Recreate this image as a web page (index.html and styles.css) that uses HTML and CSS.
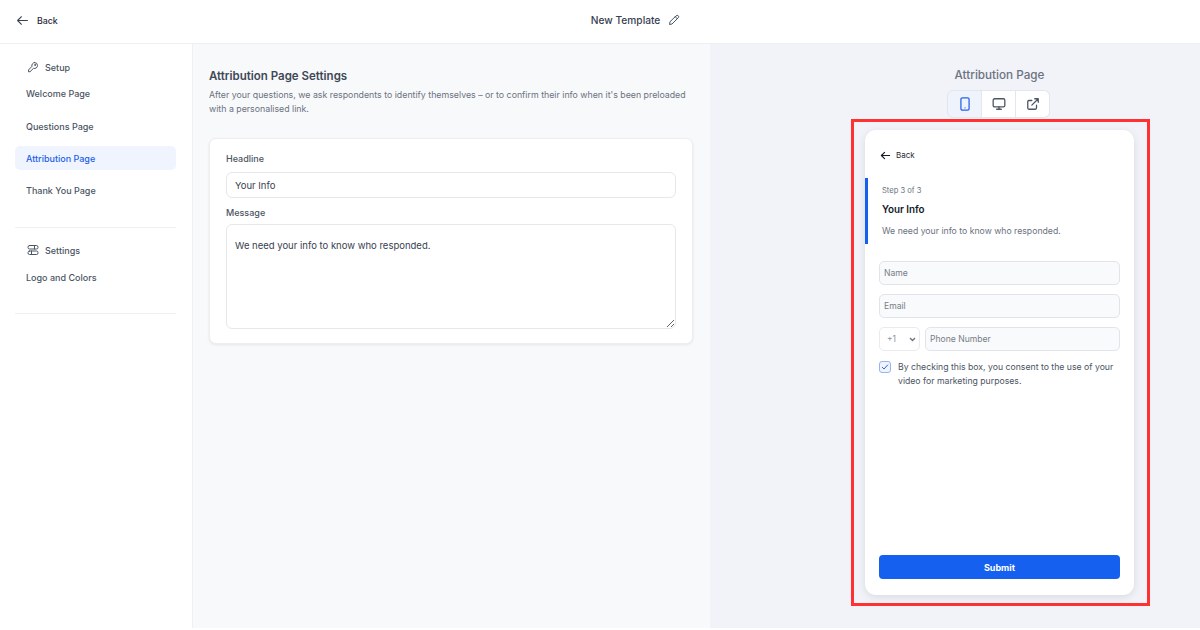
FILE: index.html
```html
<!DOCTYPE html>
<html lang="en">
<head>
    <meta charset="UTF-8">
    <meta name="viewport" content="width=device-width, initial-scale=1.0">
    <title>New Template</title>
    <link rel="stylesheet" href="styles.css">
</head>
<body>
    <!-- Top bar -->
    <header class="topbar">
        <a class="back-link">
            <svg class="icon" width="13" height="13" viewBox="0 0 24 24" fill="none" stroke="#374151" stroke-width="2" stroke-linecap="round" stroke-linejoin="round"><path d="M21 12H3M10 5l-7 7 7 7"/></svg>
            Back
        </a>
        <div class="template-name">
            New Template
            <svg width="12" height="12" viewBox="0 0 24 24" fill="none" stroke="#4b5563" stroke-width="2" stroke-linecap="round" stroke-linejoin="round"><path d="M16.5 3.5a2.8 2.8 0 0 1 4 4L8 20l-5 1 1-5z"/><path d="M14.5 5.5l4 4"/></svg>
        </div>
    </header>

    <div class="workspace">
        <!-- Sidebar -->
        <nav class="sidebar">
            <div class="nav-group setup-group">
                <div class="nav-heading">
                    <svg width="12" height="12" viewBox="0 0 24 24" fill="none" stroke="#4b5563" stroke-width="2" stroke-linecap="round" stroke-linejoin="round"><path d="M15 3a6 6 0 0 1 6 6 6 6 0 0 1-8 5.6L6 21.5H3V18l6.900-7.400A6 6 0 0 1 15 3z"/><circle cx="16" cy="8" r="1"/></svg>
                    Setup
                </div>
                <a class="nav-item first">Welcome Page</a>
                <a class="nav-item">Questions Page</a>
                <a class="nav-item active">Attribution Page</a>
                <a class="nav-item">Thank You Page</a>
            </div>
            <div class="nav-group settings-group">
                <div class="nav-heading">
                    <svg width="12" height="12" viewBox="0 0 24 24" fill="none" stroke="#4b5563" stroke-width="2" stroke-linecap="round" stroke-linejoin="round"><rect x="2" y="3" width="20" height="7" rx="3"/><path d="M15 3v7"/><rect x="2" y="14" width="20" height="7" rx="3"/><path d="M9 14v7"/></svg>
                    Settings
                </div>
                <a class="nav-item logo-item">Logo and Colors</a>
            </div>
        </nav>

        <!-- Settings form -->
        <main class="settings">
            <h1>Attribution Page Settings</h1>
            <p class="intro">After your questions, we ask respondents to identify themselves – or to confirm their info when it's been preloaded with a personalised link.</p>
            <section class="card">
                <label class="field-label">Headline</label>
                <input class="text-input" type="text" value="Your Info">
                <label class="field-label message-label">Message</label>
                <textarea class="text-area">We need your info to know who responded.</textarea>
            </section>
        </main>

        <!-- Preview -->
        <aside class="preview">
            <h2>Attribution Page</h2>
            <div class="view-toggle">
                <button class="view-btn active">
                    <svg width="14" height="14" viewBox="0 0 24 24" fill="none" stroke="#2563eb" stroke-width="2.200" stroke-linecap="round" stroke-linejoin="round"><rect x="5" y="1.500" width="14" height="21" rx="2.500"/><path d="M12 18.500h.01"/></svg>
                </button>
                <button class="view-btn">
                    <svg width="14" height="14" viewBox="0 0 24 24" fill="none" stroke="#4b5563" stroke-width="2.200" stroke-linecap="round" stroke-linejoin="round"><rect x="2" y="3" width="20" height="14" rx="2.500"/><path d="M8 21h8M12 17v4"/></svg>
                </button>
                <button class="view-btn">
                    <svg width="14" height="14" viewBox="0 0 24 24" fill="none" stroke="#4b5563" stroke-width="2.200" stroke-linecap="round" stroke-linejoin="round"><path d="M18 14v5a2 2 0 0 1-2 2H5a2 2 0 0 1-2-2V8a2 2 0 0 1 2-2h5"/><path d="M15 3h6v6M10 14L21 3"/></svg>
                </button>
            </div>

            <div class="highlight">
                <div class="phone-card">
                    <a class="phone-back">
                        <svg width="11" height="11" viewBox="0 0 24 24" fill="none" stroke="#111827" stroke-width="2.400" stroke-linecap="round" stroke-linejoin="round"><path d="M21 12H3M10 5l-7 7 7 7"/></svg>
                        Back
                    </a>
                    <div class="step-block">
                        <div class="step-count">Step 3 of 3</div>
                        <div class="step-title">Your Info</div>
                        <div class="step-message">We need your info to know who responded.</div>
                    </div>
                    <form class="phone-form">
                        <input class="phone-input" type="text" placeholder="Name">
                        <input class="phone-input" type="text" placeholder="Email">
                        <div class="phone-row">
                            <select class="code-select"><option>+1</option></select>
                            <input class="phone-input" type="text" placeholder="Phone Number">
                        </div>
                        <div class="consent">
                            <span class="check-box">
                                <svg width="8" height="8" viewBox="0 0 24 24" fill="none" stroke="#2563eb" stroke-width="3" stroke-linecap="round" stroke-linejoin="round"><path d="M4 13l5 5L20 6"/></svg>
                            </span>
                            <span>By checking this box, you consent to the use of your video for marketing purposes.</span>
                        </div>
                    </form>
                    <button class="submit-btn">Submit</button>
                </div>
            </div>
        </aside>
    </div>
</body>
</html>
```

FILE: styles.css
```css
* {
    box-sizing: border-box;
    margin: 0;
    padding: 0;
    font-family: Inter, "Noto Sans", sans-serif;
}
body {
    width: 1200px;
    height: 630px;
    overflow: hidden;
    background-color: #ffffff;
    color: #374151;
}
.topbar {
    display: flex;
    align-items: center;
    height: 44px;
    padding: 0 0 3px 16px;
    background-color: #ffffff;
    border-bottom: 1px solid #eef0f4;
}
.back-link {
    display: flex;
    align-items: center;
    gap: 8px;
    font-size: 8.800px;
    font-weight: 500;
    color: #1f2937;
}
.template-name {
    display: flex;
    align-items: center;
    gap: 8px;
    margin-left: 533px;
    font-size: 10.200px;
    font-weight: 500;
    color: #374151;
}
.workspace {
    display: flex;
    height: 584px;
}
.sidebar {
    width: 193px;
    padding: 0 16px 0 15px;
    background-color: #ffffff;
    border-right: 1px solid #eef0f4;
}
.nav-group {
    border-bottom: 1px solid #eef0f4;
}
.setup-group {
    height: 184px;
    padding-top: 16px;
}
.settings-group {
    height: 86px;
    padding-top: 15px;
}
.nav-heading {
    display: flex;
    align-items: center;
    gap: 6px;
    height: 14px;
    padding-left: 12px;
    font-size: 9px;
    font-weight: 500;
    color: #4b5563;
}
.nav-item {
    display: flex;
    align-items: center;
    height: 24px;
    margin-bottom: 8px;
    padding-left: 11px;
    font-size: 9px;
    font-weight: 500;
    color: #4b5563;
    border-radius: 5px;
}
.nav-item.first {
    margin-top: 7px;
    margin-bottom: 9px;
}
.logo-item {
    margin-top: 8px;
}
.nav-item.active {
    background-color: #eff4ff;
    color: #1d5fe8;
}
.settings {
    width: 517px;
    padding: 24px 17px 0 16px;
    background-color: #f8f9fb;
}
.settings h1 {
    font-size: 11.500px;
    font-weight: 600;
    line-height: 16px;
    color: #3f4856;
}
.intro {
    margin-top: 4px;
    font-size: 8.800px;
    line-height: 13.500px;
    color: #6b7280;
}
.card {
    display: flex;
    flex-direction: column;
    margin-top: 23px;
    height: 206px;
    padding: 14px 16px;
    background-color: #ffffff;
    border: 1px solid #eceef2;
    border-radius: 7px;
    box-shadow: 0 1px 3px rgba(0, 0, 0, 0.08);
}
.field-label {
    font-size: 9px;
    font-weight: 500;
    line-height: 12px;
    color: #4b5563;
}
.message-label {
    margin-top: 9px;
}
.text-input {
    flex: none;
    height: 26px;
    margin-top: 7px;
    padding: 0 8px;
    font-size: 9.500px;
    color: #374151;
    background-color: #ffffff;
    border: 1px solid #e5e7eb;
    border-radius: 6px;
    outline: none;
}
.text-area {
    flex: none;
    height: 105px;
    margin-top: 5px;
    padding: 15px 8px;
    font-size: 9.500px;
    color: #374151;
    border: 1px solid #e5e7eb;
    border-radius: 6px;
    outline: none;
}
.preview {
    flex: 1;
    display: flex;
    flex-direction: column;
    align-items: center;
    padding: 24px 0 0 89px;
    background-color: #f1f3f8;
}
.preview h2 {
    font-size: 11.700px;
    font-weight: 500;
    line-height: 15px;
    color: #6b7280;
}
.view-toggle {
    display: flex;
    gap: 1px;
    margin: 7px 2px 0 0;
    background-color: #e2e6ee;
    border: 1px solid #e2e6ee;
    border-radius: 6px;
    overflow: hidden;
}
.view-btn {
    display: flex;
    align-items: center;
    justify-content: center;
    width: 33px;
    height: 26px;
    background-color: #ffffff;
    border: none;
}
.view-btn.active {
    background-color: #eff3fb;
}
.highlight {
    flex: none;
    width: 299px;
    height: 487px;
    margin: 1px 0 0 2px;
    padding: 8px 13px 8px 11px;
    border: 3px solid #ff3131;
}
.phone-card {
    display: flex;
    flex-direction: column;
    height: 465px;
    padding: 19px 14px 16px;
    background-color: #ffffff;
    border-radius: 11px;
    box-shadow: 0 2px 8px rgba(0, 0, 0, 0.1);
}
.phone-back {
    display: flex;
    align-items: center;
    gap: 5px;
    height: 12px;
    padding-left: 1px;
    font-size: 8px;
    color: #1f2937;
}
.step-block {
    width: 255px;
    height: 66px;
    margin: 17px 0 0 -14px;
    padding: 8px 0 0 14px;
    border-left: 3px solid #1660f0;
}
.step-count {
    font-size: 7.600px;
    line-height: 10px;
    color: #6b7280;
}
.step-title {
    margin-top: 7px;
    font-size: 9.800px;
    font-weight: 600;
    line-height: 13px;
    color: #111827;
}
.step-message {
    margin-top: 9px;
    font-size: 8.700px;
    line-height: 12px;
    color: #6b7280;
}
.phone-form {
    display: flex;
    flex-direction: column;
    gap: 9px;
    margin-top: 17px;
    flex: 1;
}
.phone-input {
    width: 100%;
    height: 24px;
    padding: 0 4px;
    font-size: 8.600px;
    background-color: #f9fafb;
    border: 1px solid #e1e4ea;
    border-radius: 5px;
    outline: none;
}
.phone-input::placeholder {
    color: #777d87;
}
.phone-row {
    display: flex;
    gap: 5px;
}
.code-select {
    flex: none;
    width: 41px;
    height: 24px;
    padding-left: 7px;
    font-size: 8.500px;
    color: #8b919b;
    appearance: none;
    background: #ffffff url("data:image/svg+xml,%3Csvg xmlns='http://www.w3.org/2000/svg' width='7' height='5'%3E%3Cpath d='M1 1l2.500 2.500L6 1' fill='none' stroke='%236b7280' stroke-width='1.300'/%3E%3C/svg%3E") no-repeat right 3px center;
    border: 1px solid #e9ebef;
    border-radius: 5px;
    outline: none;
}
.consent {
    display: flex;
    gap: 7px;
    font-size: 8.700px;
    line-height: 14px;
    color: #4b5563;
}
.check-box {
    flex: none;
    display: flex;
    align-items: center;
    justify-content: center;
    width: 12px;
    height: 12px;
    margin-top: 1px;
    background-color: #eff4ff;
    border: 1px solid #93b4f5;
    border-radius: 3px;
}
.submit-btn {
    height: 24px;
    font-size: 9px;
    font-weight: 700;
    color: #ffffff;
    background-color: #1660f0;
    border: none;
    border-radius: 4px;
}
```
